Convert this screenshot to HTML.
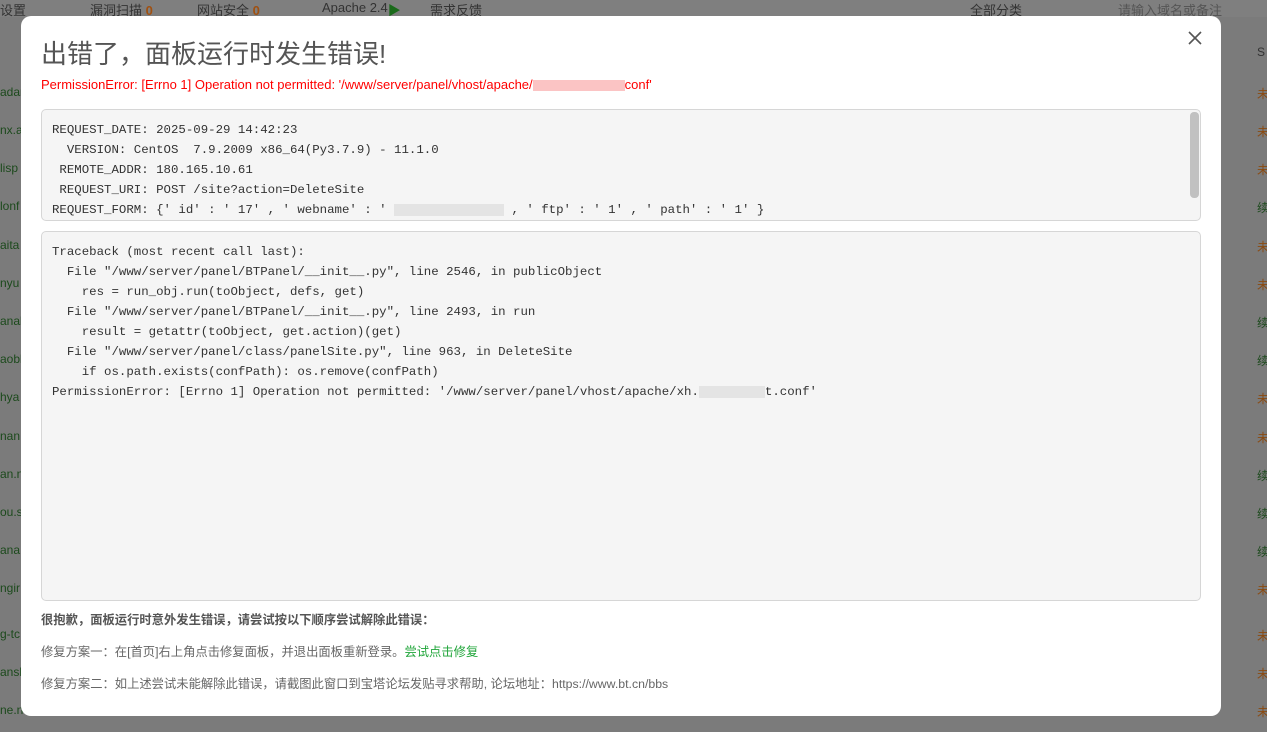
<!DOCTYPE html>
<html><head><meta charset="utf-8"><style>
*{margin:0;padding:0;box-sizing:border-box}
body{width:1267px;height:732px;overflow:hidden;background:#7b7b7b;font-family:"Liberation Sans","Noto Sans CJK SC",sans-serif;position:relative}
.top{position:absolute;left:0;top:0;width:1267px;height:17px;background:#7f7f7f;color:#333;font-size:13px}
.top span{position:absolute;top:0}
.side{position:absolute;font-size:12px;color:#1c4a1c}
.right{position:absolute;left:1257px;font-size:12px;color:#8a4a10}
.modal{position:absolute;left:21px;top:16px;width:1200px;height:700px;background:#fff;border-radius:10px}
h1{position:absolute;left:20px;top:18px;font-size:26px;font-weight:normal;color:#555}
.err{position:absolute;left:20px;top:61px;font-size:13px;color:#f00}
.close{position:absolute;left:1166px;top:14px;width:16px;height:16px}
.box{position:absolute;left:20px;width:1160px;background:#f5f5f5;border:1px solid #d6d6d6;border-radius:5px;font-family:"Liberation Mono",monospace;font-size:12.4px;color:#333;line-height:20px;padding:10px 10px;white-space:pre}
.b1{top:93px;height:112px;overflow:hidden}
.b2{top:215px;height:370px;padding-top:10px}
.sb{position:absolute;right:1px;top:2px;width:9px;height:86px;background:#c1c1c1;border-radius:4px}
.blur{display:inline-block;background:#e4e4e4;height:12px;vertical-align:middle}
.t{position:absolute;left:20px;font-size:12.3px;color:#666}
</style></head><body>
<div class="top"><span style="left:0">设置</span><span style="left:90px">漏洞扫描 <b style="color:#a05010">0</b></span><span style="left:197px">网站安全 <b style="color:#a05010">0</b></span><span style="left:322px">Apache 2.4 <span style="color:#1a6a1a">▶</span></span><span style="left:430px">需求反馈</span><span style="left:970px">全部分类</span><span style="left:1118px;color:#555">请输入域名或备注</span></div>
<div class="side" style="left:0;top:85px">adar</div><div class="side" style="left:0;top:123px">nx.a</div><div class="side" style="left:0;top:161px">lisp</div><div class="side" style="left:0;top:199px">lonf</div><div class="side" style="left:0;top:238px">aita</div><div class="side" style="left:0;top:276px">nyu</div><div class="side" style="left:0;top:314px">anal</div><div class="side" style="left:0;top:352px">aobl</div><div class="side" style="left:0;top:390px">hya</div><div class="side" style="left:0;top:429px">nan</div><div class="side" style="left:0;top:467px">an.n</div><div class="side" style="left:0;top:505px">ou.s</div><div class="side" style="left:0;top:543px">ana</div><div class="side" style="left:0;top:581px">ngir</div><div class="side" style="left:0;top:627px">g-tc</div><div class="side" style="left:0;top:665px">ansh</div><div class="side" style="left:0;top:703px">ne.n</div>
<div class="right" style="top:45px;color:#333">S</div><div class="right" style="top:85px">未</div><div class="right" style="top:123px">未</div><div class="right" style="top:161px">未</div><div class="right" style="top:199px;color:#1c4a1c">续</div><div class="right" style="top:238px">未</div><div class="right" style="top:276px">未</div><div class="right" style="top:314px;color:#1c4a1c">续</div><div class="right" style="top:352px;color:#1c4a1c">续</div><div class="right" style="top:390px">未</div><div class="right" style="top:429px">未</div><div class="right" style="top:467px;color:#1c4a1c">续</div><div class="right" style="top:505px;color:#1c4a1c">续</div><div class="right" style="top:543px;color:#1c4a1c">续</div><div class="right" style="top:581px">未</div><div class="right" style="top:627px">未</div><div class="right" style="top:665px">未</div><div class="right" style="top:703px">未</div>
<div class="modal">
<h1>出错了，面板运行时发生错误!</h1>
<div class="err">PermissionError: [Errno 1] Operation not permitted: '/www/server/panel/vhost/apache/<span style="display:inline-block;width:92px;height:11px;background:#fbc4c4;vertical-align:middle"></span>conf'</div>
<svg class="close" viewBox="0 0 16 16"><path d="M2 2L14 14M14 2L2 14" stroke="#555" stroke-width="1.6"/></svg>
<div class="box b1"><div class="sb"></div>REQUEST_DATE: 2025-09-29 14:42:23
  VERSION: CentOS  7.9.2009 x86_64(Py3.7.9) - 11.1.0
 REMOTE_ADDR: 180.165.10.61
 REQUEST_URI: POST /site?action=DeleteSite
REQUEST_FORM: {' id' : ' 17' , ' webname' : ' <span class="blur" style="width:110px"></span> , ' ftp' : ' 1' , ' path' : ' 1' }</div>
<div class="box b2">Traceback (most recent call last):
  File "/www/server/panel/BTPanel/__init__.py", line 2546, in publicObject
    res = run_obj.run(toObject, defs, get)
  File "/www/server/panel/BTPanel/__init__.py", line 2493, in run
    result = getattr(toObject, get.action)(get)
  File "/www/server/panel/class/panelSite.py", line 963, in DeleteSite
    if os.path.exists(confPath): os.remove(confPath)
PermissionError: [Errno 1] Operation not permitted: '/www/server/panel/vhost/apache/xh.<span class="blur" style="width:66px"></span>t.conf'</div>
<div class="t" style="top:594px;font-weight:bold;color:#555">很抱歉，面板运行时意外发生错误，请尝试按以下顺序尝试解除此错误：</div>
<div class="t" style="top:626px">修复方案一：在[首页]右上角点击修复面板，并退出面板重新登录。<span style="color:#20a53a">尝试点击修复</span></div>
<div class="t" style="top:658px">修复方案二：如上述尝试未能解除此错误，请截图此窗口到宝塔论坛发贴寻求帮助, 论坛地址：https://www.bt.cn/bbs</div>
</div>
</body></html>
